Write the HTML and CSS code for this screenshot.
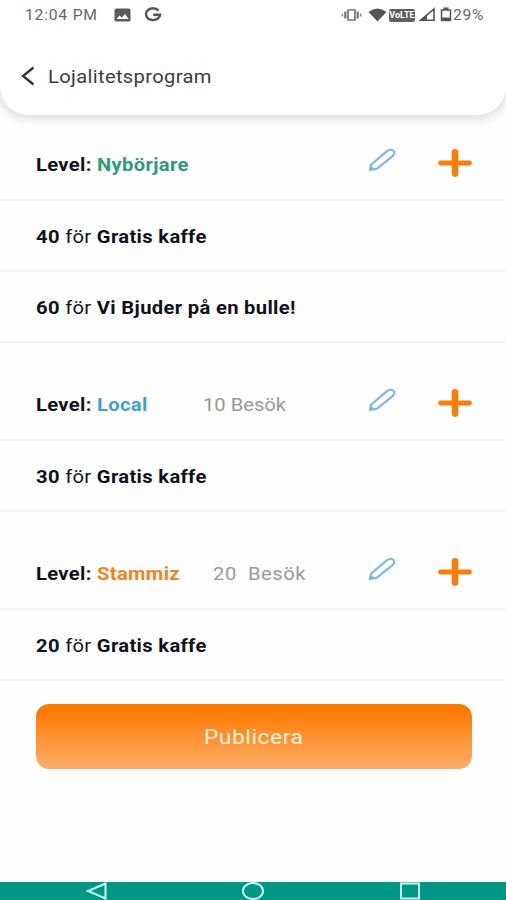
FILE: index.html
```
<!DOCTYPE html>
<html lang="sv">
<head>
    <meta charset="UTF-8">
    <meta name="viewport" content="width=device-width, initial-scale=1.0">
    <title>Lojalitetsprogram</title>
    <link rel="stylesheet" href="styles.css">
</head>
<body>
    <!-- Shared icons -->
    <svg class="sprite" width="0" height="0">
        <symbol id="pencil" viewBox="0 0 28 24">
            <path d="M1.8 21.8L3.2 16.6L19 3.2Q22.4 .8 25.2 2.6Q27.6 4.8 24.6 8.2L8.6 20.8Z"/>
            <path d="M1.8 21.8L2.8 18L6 20.8Z" fill="#82b7e6" stroke-width="1"/>
        </symbol>
        <symbol id="plus" viewBox="0 0 34 28">
            <path d="M17 3.4V24.6" stroke-width="6.6"/>
            <path d="M2.7 14H31.3" stroke-width="5"/>
        </symbol>
    </svg>

    <header class="header">
        <div class="status-bar">
            <span class="text time">12:04 PM</span>
            <svg class="icon-image" width="17" height="14" viewBox="0 0 17 14">
                <rect x=".5" y=".5" width="16" height="13" rx="1.5" fill="#5c5c5c"/>
                <path d="M2.5 11L5.5 7.5L7.8 9.6L11 6L14.5 11Z" fill="#fff"/>
            </svg>
            <svg class="icon-google" width="18" height="15" viewBox="0 0 18 15">
                <path d="M14.6 3.6A7 5.9 0 1 0 16 7.7H9.2" fill="none" stroke="#555" stroke-width="2.4"/>
            </svg>
            <svg class="icon-vibrate" width="21" height="14" viewBox="0 0 21 14">
                <path d="M7 2H14V12H7Z" fill="none" stroke="#777" stroke-width="1.7"/>
                <path d="M4.3 3.5V10.5M16.7 3.5V10.5" fill="none" stroke="#777" stroke-width="2.2"/>
                <path d="M1.4 5.5V8.5M19.6 5.5V8.5" fill="none" stroke="#888" stroke-width="1.5"/>
            </svg>
            <svg class="icon-wifi" width="19" height="14" viewBox="0 0 19 14">
                <path d="M.5 4Q9.5-3 18.5 4L9.5 13.5Z" fill="#555"/>
            </svg>
            <span class="volte"><span>VoLTE</span></span>
            <svg class="icon-signal" width="18" height="15" viewBox="0 0 18 15">
                <path d="M2.5 13.3L16 2V13.3Z" fill="none" stroke="#555" stroke-width="1.6"/>
                <path d="M1 14L9 7.5V14Z" fill="#555"/>
            </svg>
            <svg class="icon-battery" width="12" height="15" viewBox="0 0 12 15">
                <path d="M1.5 3H10.5V13.5H1.5Z" fill="none" stroke="#555" stroke-width="1.5"/>
                <path d="M3.5 .5H8.5V3H3.5ZM1.5 10.5H10.5V14H1.5Z" fill="#555"/>
            </svg>
            <span class="text battery">29%</span>
        </div>
        <div class="title-bar">
            <svg class="back" width="14" height="20" viewBox="0 0 14 20">
                <path d="M12.5 1.5L2 10L12.5 18.5"/>
            </svg>
            <h1 class="text title">Lojalitetsprogram</h1>
        </div>
    </header>

    <main>
        <section>
            <div class="level-row first">
                <span class="text level">Level: <span class="green">Nybörjare</span></span>
                <svg class="edit"><use href="#pencil"/></svg>
                <svg class="add"><use href="#plus"/></svg>
            </div>
            <div class="reward-row"><span class="text reward"><b>40</b> för <b>Gratis kaffe</b></span></div>
            <div class="reward-row"><span class="text reward"><b>60</b> för <b>Vi Bjuder på en bulle!</b></span></div>
        </section>

        <section>
            <div class="level-row">
                <span class="text level">Level: <span class="blue">Local</span></span>
                <span class="text visits visits-local">10 Besök</span>
                <svg class="edit"><use href="#pencil"/></svg>
                <svg class="add"><use href="#plus"/></svg>
            </div>
            <div class="reward-row"><span class="text reward"><b>30</b> för <b>Gratis kaffe</b></span></div>
        </section>

        <section>
            <div class="level-row">
                <span class="text level">Level: <span class="orange">Stammiz</span></span>
                <span class="text visits visits-stammiz">20&nbsp; Besök</span>
                <svg class="edit"><use href="#pencil"/></svg>
                <svg class="add"><use href="#plus"/></svg>
            </div>
            <div class="reward-row"><span class="text reward"><b>20</b> för <b>Gratis kaffe</b></span></div>
        </section>

        <button type="button" class="publish"><span>Publicera</span></button>
    </main>

    <nav class="nav-bar">
        <svg width="22" height="18" viewBox="0 0 22 18"><path d="M20.5 1.5V16.5L3 9Z"/></svg>
        <svg width="24" height="18" viewBox="0 0 24 18"><ellipse cx="12" cy="9" rx="10" ry="8"/></svg>
        <svg width="22" height="18" viewBox="0 0 22 18"><rect x="2" y="1.5" width="18" height="15"/></svg>
    </nav>
</body>
</html>
```
FILE: styles.css
```
* {
    box-sizing: border-box;
}

body {
    margin: 0;
    height: 900px;
    display: flex;
    flex-direction: column;
    overflow: hidden;
    background-color: #fefefe;
    font-family: Roboto, sans-serif;
    color: #10121b;
}

svg {
    display: block;
    flex: none;
}

.sprite {
    display: none;
}

/* Wide lettering, stretched from the left edge */
.text {
    display: block;
    white-space: nowrap;
    transform: scaleX(1.12);
    transform-origin: left center;
    letter-spacing: 0.3px;
}

.header {
    height: 115px;
    flex: none;
    background-color: #fff;
    border-radius: 0 0 28px 28px;
    box-shadow: 0 2px 12px rgba(0, 0, 0, 0.18);
}

.status-bar {
    display: flex;
    align-items: center;
    height: 29px;
    padding-left: 25px;
    color: #666;
}

.time {
    width: 89px;
    font-size: 14px;
    letter-spacing: 0.7px;
}

.icon-google {
    margin-left: 13px;
}

.icon-vibrate {
    margin-left: 179px;
}

.icon-wifi {
    margin-left: 6px;
}

.volte {
    width: 26px;
    height: 13px;
    margin: 2px 3px 0 2px;
    border-radius: 2px;
    background-color: #606060;
    color: #fff;
    font-size: 9px;
    font-weight: 700;
    line-height: 13px;
    text-align: center;
}

.icon-battery {
    margin-left: 4px;
}

.battery {
    font-size: 14px;
    margin-left: 1px;
    letter-spacing: 0.6px;
}

.title-bar {
    display: flex;
    align-items: center;
    height: 94px;
    padding-left: 21px;
}

.back path {
    fill: none;
    stroke: #333;
    stroke-width: 2.3;
}

.title {
    margin: 0 0 0 13px;
    font-size: 18px;
    font-weight: 400;
    color: #3c3c3c;
}

main {
    flex: 1;
}

.level-row {
    display: flex;
    align-items: flex-end;
    height: 98px;
    padding: 0 34px 22px 36px;
    border-bottom: 2px solid #f5f5f5;
}

.level-row.first {
    height: 86px;
}

.level {
    width: 167px;
    font-size: 18px;
    font-weight: 700;
    line-height: 24px;
}

.green {
    color: #2e9b78;
}

.blue {
    color: #429fcc;
}

.orange {
    color: #f08519;
}

.visits {
    font-size: 18px;
    line-height: 24px;
    color: #999;
}

.visits-local {
    letter-spacing: 0;
}

.visits-stammiz {
    margin-left: 10px;
    letter-spacing: 0.5px;
}

.edit {
    width: 28px;
    height: 24px;
    margin: 0 42px 5px auto;
    fill: none;
    stroke: #82b7e6;
    stroke-width: 2.2;
    stroke-linejoin: round;
}

.add {
    width: 34px;
    height: 28px;
    stroke: #fb7b0b;
    stroke-linecap: round;
}

.reward-row {
    display: flex;
    align-items: center;
    height: 71px;
    padding: 2px 36px 0;
    border-bottom: 2px solid #f5f5f5;
}

.reward {
    font-size: 18px;
}

.reward b {
    font-weight: 700;
}

.publish {
    display: block;
    width: 436px;
    height: 65px;
    margin: 23px 0 0 36px;
    border: none;
    border-radius: 13px;
    background: linear-gradient(#ff7a00 10%, #fdae6b);
    color: #fff3df;
    font-family: inherit;
    font-size: 20px;
    letter-spacing: 0.5px;
}

.publish span {
    display: inline-block;
    transform: scaleX(1.14);
}

.nav-bar {
    display: flex;
    justify-content: space-between;
    height: 18px;
    padding: 0 85px;
    background-color: #009784;
}

.nav-bar svg {
    fill: none;
    stroke: #c9fff5;
    stroke-width: 2;
}
```
